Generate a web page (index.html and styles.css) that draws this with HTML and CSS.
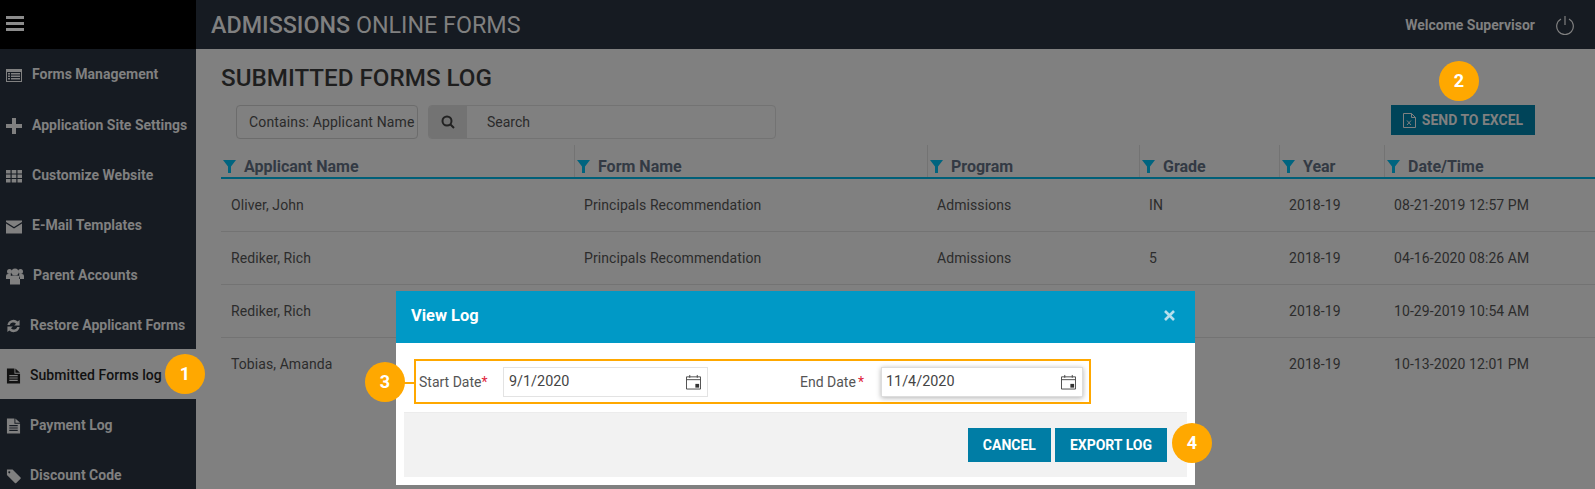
FILE: index.html
```html
<!DOCTYPE html>
<html>
<head>
    <title>Submitted Forms Log</title>
    <link rel="stylesheet" href="styles.css">
</head>
<body>
    <div class="app">
        <aside class="sidebar">
            <div class="menu-toggle">
                <svg width="18" height="15" viewBox="0 0 18 15"><path d="M0 0h18v3H0zM0 6h18v3H0zM0 12h18v3H0z" fill="#8c8c8c"/></svg>
            </div>
            <nav>
                <a class="nav-item">
                    <svg class="nav-icon" viewBox="0 0 16 16"><path fill-rule="evenodd" d="M0 2h16v13H0zM1 5v9h14V5zM2 6h2v1.500H2zM5 6h9v1.500H5zM2 8.500h2V10H2zM5 8.500h9V10H5zM2 11h2v1.500H2zM5 11h9v1.500H5z" fill="#808080"/></svg>
                    <span>Forms Management</span>
                </a>
                <a class="nav-item">
                    <svg class="nav-icon" viewBox="0 0 16 16"><path d="M6 0h4v6h6v4h-6v6H6v-6H0V6h6z" fill="#808080"/></svg>
                    <span>Application Site Settings</span>
                </a>
                <a class="nav-item">
                    <svg class="nav-icon" viewBox="0 0 16 16"><path d="M0 2h4.500v3.500H0zM5.700 2h4.600v3.500H5.700zM11.500 2H16v3.500h-4.500zM0 6.500h4.500V10H0zM5.700 6.500h4.600V10H5.700zM11.500 6.500H16V10h-4.500zM0 11h4.500v3.500H0zM5.700 11h4.600v3.500H5.700zM11.500 11H16v3.500h-4.500z" fill="#808080"/></svg>
                    <span>Customize Website</span>
                </a>
                <a class="nav-item">
                    <svg class="nav-icon" viewBox="0 0 16 16"><path d="M0 2.500h16v1.500L8 9 0 4zM0 5.500l8 5 8-5V15.500H0z" fill="#808080"/></svg>
                    <span>E-Mail Templates</span>
                </a>
                <a class="nav-item item-parent">
                    <svg class="nav-icon" viewBox="0 0 18 18"><circle cx="3.500" cy="4.500" r="2.500" fill="#808080"/><circle cx="14.500" cy="4.500" r="2.500" fill="#808080"/><circle cx="9" cy="5" r="3.500" fill="#808080"/><path d="M0 12V9q0-2 2-2h2.800v5zM18 12V9q0-2-2-2h-2.800v5zM4 17.500V11q0-2.500 2.500-2.500h5Q14 8.500 14 11v6.500z" fill="#808080"/></svg>
                    <span>Parent Accounts</span>
                </a>
                <a class="nav-item item-short">
                    <svg class="nav-icon" viewBox="0 0 16 16"><path d="M1.500 7a6.500 6.500 0 0 1 11-3.700L14.500 1.500v6H8.700l2-2A4 4 0 0 0 4 7zM14.500 9a6.500 6.500 0 0 1-11 3.700L1.500 14.500v-6h5.800l-2 2A4 4 0 0 0 12 9z" fill="#808080"/></svg>
                    <span>Restore Applicant Forms</span>
                </a>
                <a class="nav-item item-short active">
                    <svg class="nav-icon" viewBox="0 0 16 16"><path fill-rule="evenodd" d="M1 0h8v5.500h6V16H1zM3.500 7v1.200h9V7zM3.500 9.500v1.200h9V9.500zM3.500 12v1.200h9V12zM10 0l5 4.500h-5z" fill="#111"/></svg>
                    <span>Submitted Forms log</span>
                </a>
                <a class="nav-item item-short">
                    <svg class="nav-icon" viewBox="0 0 16 16"><path fill-rule="evenodd" d="M1 0h8v5.500h6V16H1zM3.500 7v1.200h9V7zM3.500 9.500v1.200h9V9.500zM3.500 12v1.200h9V12zM10 0l5 4.500h-5z" fill="#808080"/></svg>
                    <span>Payment Log</span>
                </a>
                <a class="nav-item item-short">
                    <svg class="nav-icon" viewBox="0 0 16 16"><path fill-rule="evenodd" d="M1 1h6l8.500 8.500a1 1 0 0 1 0 1.400l-4.600 4.600a1 1 0 0 1-1.400 0L1 7zM3.500 3a1 1 0 1 0 .01 0z" fill="#808080"/></svg>
                    <span>Discount Code</span>
                </a>
            </nav>
        </aside>
        <div class="content">
            <header class="topbar">
                <div class="app-title"><b>ADMISSIONS</b> ONLINE FORMS</div>
                <div class="user-box">
                    <span>Welcome Supervisor</span>
                    <svg width="20" height="20" viewBox="0 0 20 20" fill="none" stroke="#808080" stroke-width="1.200"><path d="M6 4a8.300 8.300 0 1 0 8 0"/><path d="M10 1v9"/></svg>
                </div>
            </header>
            <main class="page">
                <h1>SUBMITTED FORMS LOG</h1>
                <div class="toolbar">
                    <div class="filter-select">Contains: Applicant Name</div>
                    <div class="search-group">
                        <span class="search-addon">
                            <svg width="14" height="14" viewBox="0 0 14 14" fill="none" stroke="#222" stroke-width="2"><circle cx="6" cy="6" r="4.500"/><path d="M9.500 9.500l3.500 3.500"/></svg>
                        </span>
                        <span class="search-text">Search</span>
                    </div>
                    <button class="excel-btn">
                        <svg width="13" height="15" viewBox="0 0 13 15" fill="none" stroke="#808080"><path d="M.5.500h8l4 4v10H.5zM8.500.500v4h4"/><path d="M4 7.500l4 4.500M8 7.500l-4 4.500"/></svg>
                        SEND TO EXCEL
                    </button>
                </div>
                <div class="log-table">
                    <div class="log-head">
                        <div class="col-head"><svg class="funnel" viewBox="0 0 13 13"><path d="M0 0h13L8 6.500V13H5V6.500z"/></svg>Applicant Name</div>
                        <div class="col-head"><svg class="funnel" viewBox="0 0 13 13"><path d="M0 0h13L8 6.500V13H5V6.500z"/></svg>Form Name</div>
                        <div class="col-head"><svg class="funnel" viewBox="0 0 13 13"><path d="M0 0h13L8 6.500V13H5V6.500z"/></svg>Program</div>
                        <div class="col-head"><svg class="funnel" viewBox="0 0 13 13"><path d="M0 0h13L8 6.500V13H5V6.500z"/></svg>Grade</div>
                        <div class="col-head"><svg class="funnel" viewBox="0 0 13 13"><path d="M0 0h13L8 6.500V13H5V6.500z"/></svg>Year</div>
                        <div class="col-head"><svg class="funnel" viewBox="0 0 13 13"><path d="M0 0h13L8 6.500V13H5V6.500z"/></svg>Date/Time</div>
                    </div>
                    <div class="log-row">
                        <div>Oliver, John</div><div>Principals Recommendation</div><div>Admissions</div><div>IN</div><div>2018-19</div><div>08-21-2019 12:57 PM</div>
                    </div>
                    <div class="log-row">
                        <div>Rediker, Rich</div><div>Principals Recommendation</div><div>Admissions</div><div>5</div><div>2018-19</div><div>04-16-2020 08:26 AM</div>
                    </div>
                    <div class="log-row">
                        <div>Rediker, Rich</div><div>Principals Recommendation</div><div>Admissions</div><div>5</div><div>2018-19</div><div>10-29-2019 10:54 AM</div>
                    </div>
                    <div class="log-row last">
                        <div>Tobias, Amanda</div><div>Principals Recommendation</div><div>Admissions</div><div>3</div><div>2018-19</div><div>10-13-2020 12:01 PM</div>
                    </div>
                </div>
            </main>
        </div>
    </div>

    <div class="modal">
        <div class="modal-head">
            <span>View Log</span>
            <svg width="11" height="11" viewBox="0 0 11 11" stroke="#b5dfec" stroke-width="2.600"><path d="M1 1l9 9M10 1l-9 9"/></svg>
        </div>
        <div class="modal-body">
            <div class="date-box">
                <label class="start-label">Start Date<i>*</i></label>
                <div class="date-input start-input">
                    <span>9/1/2020</span>
                    <svg class="cal" viewBox="0 0 16 16" fill="none" stroke="#444"><path d="M.5 2.500h15v13H.5z"/><path d="M.5 5.500h15M4 .5v3M12 .5v3" /><path d="M10 10h4v4h-4z" fill="#333" stroke="none"/></svg>
                </div>
                <label class="end-label">End Date<i>*</i></label>
                <div class="date-input end-input">
                    <span>11/4/2020</span>
                    <svg class="cal" viewBox="0 0 16 16" fill="none" stroke="#444"><path d="M.5 2.500h15v13H.5z"/><path d="M.5 5.500h15M4 .5v3M12 .5v3" /><path d="M10 10h4v4h-4z" fill="#333" stroke="none"/></svg>
                </div>
            </div>
            <div class="modal-foot">
                <button class="foot-btn">CANCEL</button>
                <button class="foot-btn">EXPORT LOG</button>
            </div>
        </div>
    </div>

    <span class="connector"></span>
    <span class="badge badge-1">1</span>
    <span class="badge badge-2">2</span>
    <span class="badge badge-3">3</span>
    <span class="badge badge-4">4</span>
</body>
</html>
```
FILE: styles.css
```css
* {
    box-sizing: border-box;
}
body {
    margin: 0;
    font-family: Roboto, "Liberation Sans", sans-serif;
    font-size: 14px;
    background-color: #808080;
    height: 489px;
    overflow: hidden;
}
.app {
    display: flex;
    height: 489px;
}
.sidebar {
    width: 196px;
    flex-shrink: 0;
    background-color: #161b22;
}
.menu-toggle {
    height: 49px;
    background-color: #000;
    display: flex;
    align-items: center;
    padding: 0 0 2px 6px;
}
.nav-item {
    display: flex;
    align-items: center;
    gap: 10px;
    height: 50px;
    padding: 2px 0 0 6px;
    color: #808080;
    font-weight: 700;
    font-size: 14px;
}
.nav-item:first-child {
    padding-top: 0;
}
.nav-icon {
    width: 16px;
    height: 16px;
    flex-shrink: 0;
    margin-top: 2px;
}
.item-parent {
    gap: 9px;
}
.item-parent .nav-icon {
    width: 18px;
    height: 18px;
}
.item-short {
    gap: 9px;
}
.item-short .nav-icon {
    width: 15px;
}
.active {
    background-color: #808080;
    color: #111;
    font-weight: 500;
    letter-spacing: 0.05px;
}
.content {
    flex: 1;
    min-width: 0;
    display: flex;
    flex-direction: column;
}
.topbar {
    height: 49px;
    background-color: #161b22;
    display: flex;
    align-items: center;
    justify-content: space-between;
    padding: 0 20px 0 15px;
    color: #808080;
}
.app-title {
    font-size: 23.300px;
}
.app-title b {
    font-weight: 500;
}
.user-box {
    display: flex;
    align-items: center;
    gap: 20px;
    font-weight: 700;
    font-size: 14px;
}
.page {
    padding: 15px 0 0 25px;
}
h1 {
    margin: 0;
    font-size: 24.200px;
    line-height: 28px;
    font-weight: 500;
    color: #1e1e1e;
}
.toolbar {
    display: flex;
    align-items: flex-start;
    margin-top: 13px;
    padding: 0 60px 0 15px;
}
.filter-select {
    width: 182px;
    height: 34px;
    line-height: 32px;
    padding-left: 12px;
    border: 1px solid #6c6c6c;
    border-radius: 4px;
    color: #2a2a2a;
    letter-spacing: 0.15px;
    white-space: nowrap;
    overflow: hidden;
}
.search-group {
    display: flex;
    width: 348px;
    height: 34px;
    margin-left: 10px;
    border: 1px solid #737373;
    border-radius: 4px;
    color: #2a2a2a;
    overflow: hidden;
}
.search-addon {
    width: 38px;
    background-color: #737373;
    display: flex;
    align-items: center;
    justify-content: center;
}
.search-text {
    line-height: 32px;
    padding-left: 20px;
}
.excel-btn {
    margin-left: auto;
    width: 144px;
    height: 30px;
    border: none;
    background-color: #004459;
    color: #808080;
    font: 700 14px Roboto, sans-serif;
    display: flex;
    align-items: center;
    justify-content: center;
    gap: 6px;
    padding: 0;
}
.log-table {
    margin-top: 6px;
}
.log-head, .log-row {
    display: grid;
    grid-template-columns: 353px 353px 212px 140px 105px 1fr;
}
.log-head {
    height: 34px;
    border-bottom: 2px solid #005f78;
}
.col-head {
    display: flex;
    align-items: flex-end;
    gap: 8px;
    padding: 0 0 1px 2px;
    border-left: 1px solid #737373;
    color: #333a44;
    font-size: 16px;
    font-weight: 700;
    line-height: 18px;
}
.col-head:first-child {
    border-left: none;
    padding-left: 2px;
}
.funnel {
    width: 13px;
    height: 13px;
    margin-bottom: 3px;
    flex-shrink: 0;
    fill: #00647f;
}
.log-row {
    height: 53px;
    padding-bottom: 1px;
    align-items: center;
    border-bottom: 1px solid #737373;
    color: #2c2c2c;
    letter-spacing: 0.08px;
}
.log-row.last {
    border-bottom: none;
}
.log-row div {
    padding-left: 10px;
}
.modal {
    position: absolute;
    left: 396px;
    top: 291px;
    width: 799px;
    height: 194px;
    background-color: #fff;
}
.modal-head {
    height: 52px;
    background-color: #0099c6;
    color: #fff;
    font-size: 16.400px;
    font-weight: 700;
    display: flex;
    align-items: center;
    justify-content: space-between;
    padding: 0 20px 3px 15px;
}
.modal-body {
    padding: 16px 8px 8px;
}
.date-box {
    display: flex;
    align-items: center;
    width: 677px;
    height: 45px;
    margin-left: 10px;
    padding-left: 3px;
    border: 2px solid #ffa800;
    color: #555;
}
.date-box i {
    color: #e0243c;
    font-style: normal;
}
.start-label {
    width: 84px;
}
.end-label {
    width: 81px;
    margin-left: 92px;
}
.end-label i {
    margin-left: 2px;
}
.date-input {
    display: flex;
    align-items: center;
    justify-content: space-between;
    height: 30px;
    padding: 0 6px 0 5px;
    border: 1px solid #e3e3e3;
    color: #444;
    font-size: 14.400px;
}
.start-input {
    width: 205px;
}
.end-input {
    width: 202px;
    padding-left: 4px;
    border-color: #ddd;
    box-shadow: 0 1px 5px rgba(0,0,0,0.3);
}
.cal {
    width: 15px;
    height: 16px;
}
.modal-foot {
    display: flex;
    justify-content: flex-end;
    gap: 4px;
    height: 65px;
    margin-top: 8px;
    padding: 15px 20px 0 0;
    background-color: #f2f2f2;
    border-top: 1px solid #ececec;
}
.foot-btn {
    height: 34px;
    padding: 0 15px;
    border: none;
    background-color: #007da5;
    color: #fff;
    font: 700 14px Roboto, sans-serif;
}
.badge {
    position: absolute;
    width: 40px;
    height: 40px;
    border-radius: 50%;
    background-color: #ffa800;
    color: #fff;
    font-size: 18px;
    font-weight: 700;
    line-height: 40px;
    text-align: center;
}
.badge-1 {
    left: 165px;
    top: 354px;
}
.badge-2 {
    left: 1439px;
    top: 61px;
}
.badge-3 {
    left: 365px;
    top: 362px;
}
.badge-4 {
    left: 1172px;
    top: 423px;
}
.connector {
    position: absolute;
    left: 400px;
    top: 382px;
    width: 16px;
    height: 2px;
    background-color: #ffa800;
}
```
